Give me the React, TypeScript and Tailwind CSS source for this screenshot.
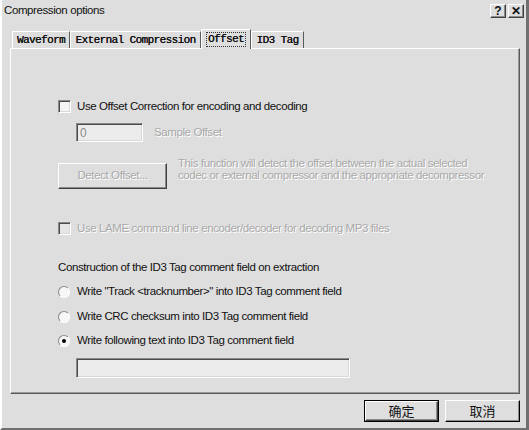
import React from 'react'

const uiFont = { fontFamily: "'Liberation Sans', Arial, sans-serif" }
const tabFont = { fontFamily: "'Liberation Mono', 'DejaVu Sans Mono', monospace" }
const cjkFont = { fontFamily: "'Noto Sans CJK SC', 'Liberation Sans', sans-serif" }

// text in the dialog is a narrow system font: Arial squeezed via tighter spacing
const txt = 'whitespace-nowrap text-[11.5px] tracking-[-0.4px]'
const disabledText = 'text-[#a9a9a9] [text-shadow:1px_1px_0_#ffffff]'
const sunken =
  'border border-t-[#8a8a8a] border-l-[#8a8a8a] border-b-white border-r-white shadow-[inset_1px_1px_0_#4a4a4a,inset_-1px_-1px_0_#d8d8d8]'
const raised =
  'border border-t-white border-l-white border-b-[#404040] border-r-[#404040] shadow-[inset_-1px_-1px_0_#8a8a8a]'

function Checkbox({ disabled }: { disabled?: boolean }) {
  return <div className={`h-[13px] w-[13px] shrink-0 ${sunken} ${disabled ? 'bg-[#e6e6e6]' : 'bg-[#f4f4f4]'}`} />
}

function Radio({ checked }: { checked?: boolean }) {
  return (
    <div className="relative h-[12px] w-[12px] shrink-0 rounded-full border border-t-[#8a8a8a] border-l-[#8a8a8a] border-b-white border-r-white bg-[#f6f6f6]">
      {checked && <div className="absolute left-[3px] top-[3px] h-[4px] w-[4px] rounded-full bg-black" />}
    </div>
  )
}

function Tab({ label, width, selected }: { label: string; width: string; selected?: boolean }) {
  return (
    <div
      className={`flex items-center justify-center border-l border-t border-l-white border-t-white border-r border-r-[#5a5a5a] bg-[#dedede] ${width} ${
        selected ? 'relative z-10 -mb-px h-[20px]' : 'h-[17px]'
      }`}
    >
      <span
        className={`text-[11px] leading-[13px] tracking-[-0.6px] text-[#111] [text-shadow:0.3px_0_0_#111] ${
          selected ? 'border border-dotted border-[#333] px-[1px]' : ''
        }`}
        style={tabFont}
      >
        {label}
      </span>
    </div>
  )
}

export default function App() {
  return (
    <div
      className="flex h-[430px] w-[529px] flex-col border-b-2 border-l-2 border-r-[3px] border-b-[#707070] border-l-white border-r-[#707070] bg-[#dedede] text-[#111]"
      style={uiFont}
    >
      {/* title bar */}
      <div className="flex h-[22px] shrink-0 items-center justify-between pl-[2px] pr-[2px]">
        <span className={txt}>Compression options</span>
        <div className="flex gap-[2px]">
          <div className={`flex h-[14px] w-[16px] items-center justify-center bg-[#dedede] text-[12px] font-bold leading-none ${raised}`}>?</div>
          <div className={`flex h-[14px] w-[16px] items-center justify-center bg-[#dedede] text-[12px] font-bold leading-none ${raised}`}>✕</div>
        </div>
      </div>

      {/* tabs */}
      <div className="ml-[10px] mt-[7px] flex h-[19px] items-end">
        <Tab label="Waveform" width="w-[58px]" />
        <Tab label="External Compression" width="w-[131px]" />
        <Tab label="Offset" width="w-[50px]" selected />
        <Tab label="ID3 Tag" width="w-[53px]" />
      </div>

      {/* panel */}
      <div className="ml-[8px] flex h-[346px] w-[510px] flex-col border border-b-[#5a5a5a] border-l-white border-r-[#5a5a5a] border-t-white pl-[47px] shadow-[inset_-1px_-1px_0_#9a9a9a]">
        <div className="mt-[51px] flex items-center gap-[6px]">
          <Checkbox />
          <span className={`${txt} leading-[13px]`}>Use Offset Correction for encoding and decoding</span>
        </div>

        <div className="ml-[18px] mt-[10px] flex items-center">
          <div className={`flex h-[19px] w-[67px] items-center bg-[#ececec] pl-[3px] text-[12px] text-[#8a8a8a] ${sunken}`}>0</div>
          <span className={`ml-[11px] ${txt} ${disabledText}`}>Sample Offset</span>
        </div>

        <div className="mt-[21px] flex items-start">
          <div className={`flex h-[26px] w-[109px] shrink-0 items-center justify-center bg-[#dedede] ${txt} ${raised} ${disabledText}`}>
            Detect Offset...
          </div>
          <div className={`-mt-[6px] ml-[11px] ${txt} leading-[12px] ${disabledText}`}>
            <div>This function will detect the offset between the actual selected</div>
            <div>codec or external compressor and the appropriate decompressor</div>
          </div>
        </div>

        <div className="mt-[33px] flex items-center gap-[6px]">
          <Checkbox disabled />
          <span className={`${txt} leading-[13px] ${disabledText}`}>Use LAME command line encoder/decoder for decoding MP3 files</span>
        </div>

        <div className={`mt-[25px] ${txt} leading-[14px]`}>Construction of the ID3 Tag comment field on extraction</div>

        <div className="mt-[11px] flex h-[14px] items-center gap-[7px]">
          <Radio />
          <span className={txt}>Write "Track &lt;tracknumber&gt;" into ID3 Tag comment field</span>
        </div>
        <div className="mt-[11px] flex h-[14px] items-center gap-[7px]">
          <Radio />
          <span className={txt}>Write CRC checksum into ID3 Tag comment field</span>
        </div>
        <div className="mt-[10px] flex h-[14px] items-center gap-[7px]">
          <Radio checked />
          <span className={txt}>Write following text into ID3 Tag comment field</span>
        </div>

        <div className={`ml-[18px] mt-[10px] h-[20px] w-[274px] bg-[#ececec] ${sunken}`} />
      </div>

      {/* buttons */}
      <div className="mt-[6px] flex w-[518px] justify-end gap-[6px]">
        <div className="border border-black">
          <div className={`flex h-[20px] w-[73px] items-center justify-center bg-[#dedede] text-[13px] ${raised}`} style={cjkFont}>
            确定
          </div>
        </div>
        <div className={`flex h-[22px] w-[75px] items-center justify-center bg-[#dedede] text-[13px] ${raised} border-b-black border-r-black`} style={cjkFont}>
          取消
        </div>
      </div>
    </div>
  )
}
